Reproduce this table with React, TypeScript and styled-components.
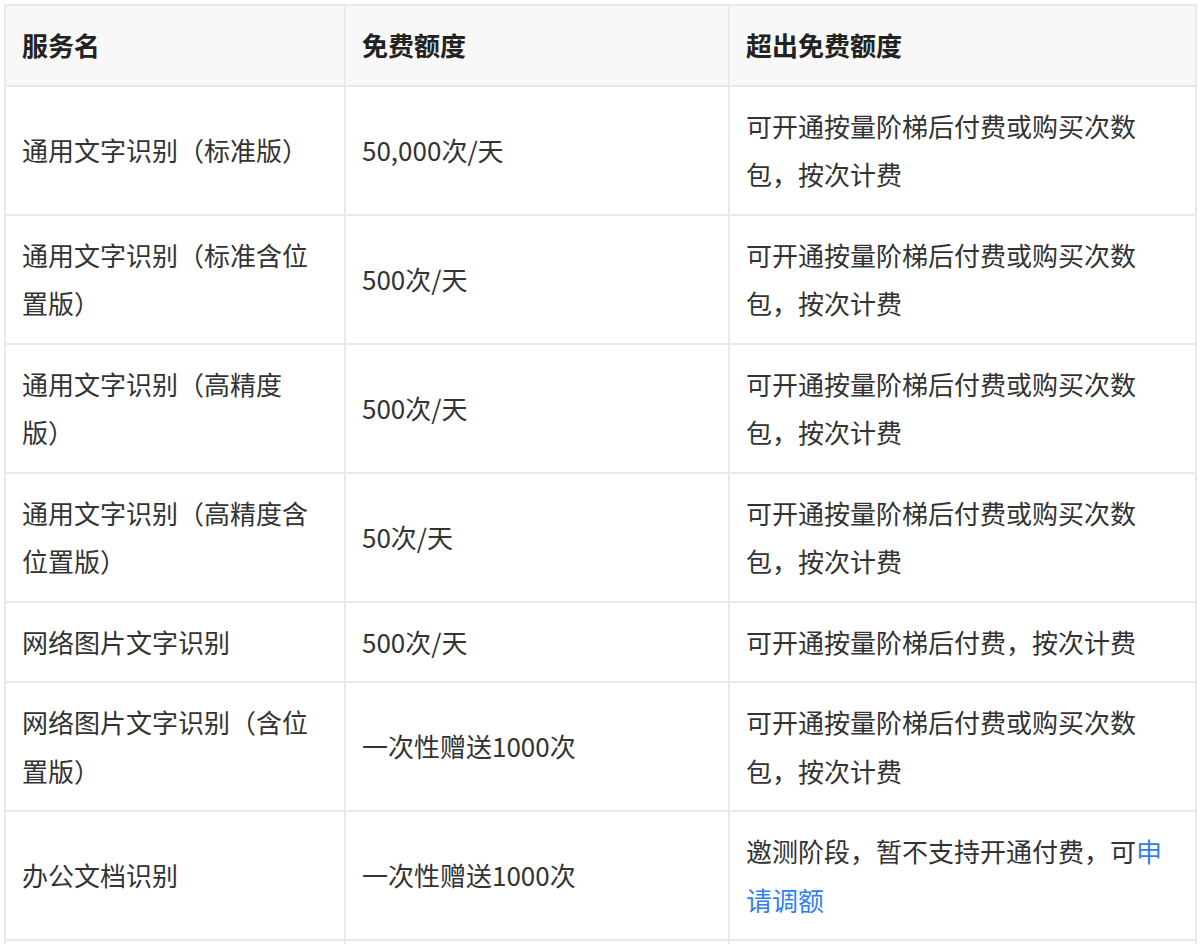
import React from "react";
import styled, { createGlobalStyle } from "styled-components";

const GlobalStyle = createGlobalStyle`
  html, body {
    margin: 0;
    padding: 0;
    background: #ffffff;
  }
  body {
    font-family: "Noto Sans CJK SC", "Noto Sans", "Liberation Sans", sans-serif;
    color: #333333;
    overflow: hidden;
  }
`;

const Page = styled.div`
  padding: 4px 5px 0 4px;
`;

const Table = styled.table`
  width: 1191px;
  table-layout: fixed;
  border-collapse: collapse;
  font-size: 26px;
  line-height: 48.5px;
  text-spacing-trim: space-all;
`;

const HeadCell = styled.th`
  background: #f8f8f8;
  border: 2px solid #e9e9e9;
  padding: 15px 16px;
  text-align: left;
  font-weight: 700;
  color: #222222;
  vertical-align: middle;
`;

const Cell = styled.td`
  border: 2px solid #e9e9e9;
  padding: 15px 16px;
  text-align: left;
  vertical-align: middle;
  color: #333333;
  word-break: break-all;
  text-spacing-trim: space-all;
`;

const Link = styled.a`
  color: #2f7ff2;
  text-decoration: none;
`;

type Row = { name: string; quota: string; extra: React.ReactNode };

const PAY = "可开通按量阶梯后付费或购买次数包，按次计费";

const rows: Row[] = [
  { name: "通用文字识别（标准版）", quota: "50,000次/天", extra: PAY },
  { name: "通用文字识别（标准含位置版）", quota: "500次/天", extra: PAY },
  { name: "通用文字识别（高精度版）", quota: "500次/天", extra: PAY },
  { name: "通用文字识别（高精度含位置版）", quota: "50次/天", extra: PAY },
  { name: "网络图片文字识别", quota: "500次/天", extra: "可开通按量阶梯后付费，按次计费" },
  { name: "网络图片文字识别（含位置版）", quota: "一次性赠送1000次", extra: PAY },
  {
    name: "办公文档识别",
    quota: "一次性赠送1000次",
    extra: (
      <>
        邀测阶段，暂不支持开通付费，可<Link href="#">申请调额</Link>
      </>
    ),
  },
  { name: "手写文字识别", quota: "500次/天", extra: PAY },
];

export default function App() {
  return (
    <>
      <GlobalStyle />
      <Page>
        <Table>
          <colgroup>
            <col style={{ width: 340 }} />
            <col style={{ width: 384 }} />
            <col style={{ width: 467 }} />
          </colgroup>
          <thead>
            <tr>
              <HeadCell>服务名</HeadCell>
              <HeadCell>免费额度</HeadCell>
              <HeadCell>超出免费额度</HeadCell>
            </tr>
          </thead>
          <tbody>
            {rows.map((r) => (
              <tr key={r.name}>
                <Cell>{r.name}</Cell>
                <Cell>{r.quota}</Cell>
                <Cell>{r.extra}</Cell>
              </tr>
            ))}
          </tbody>
        </Table>
      </Page>
    </>
  );
}
